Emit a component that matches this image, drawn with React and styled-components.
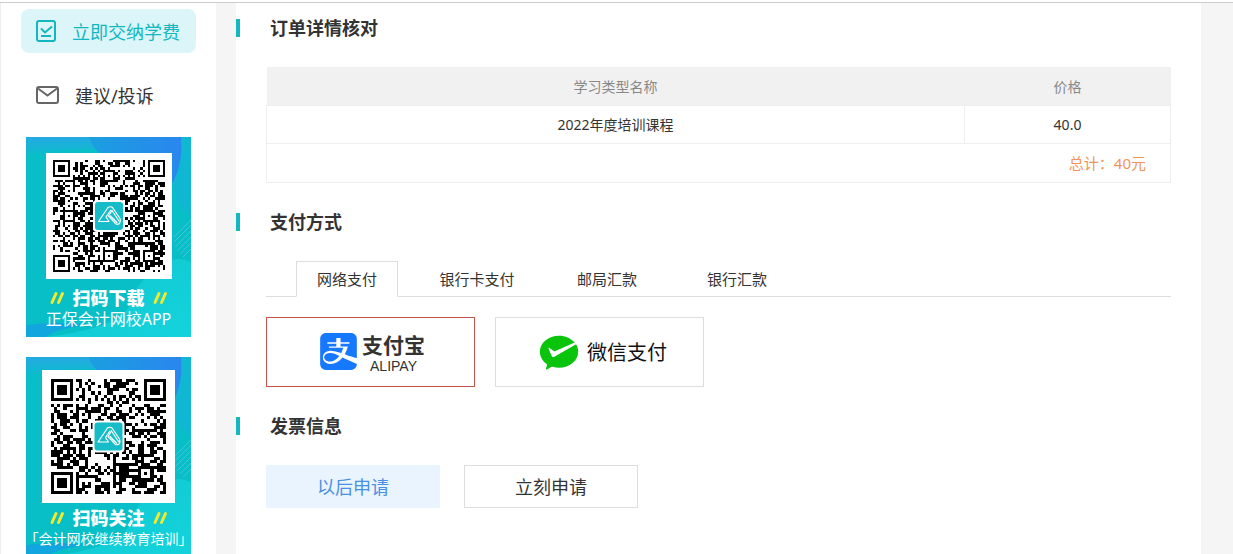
import React from "react";
import styled, { createGlobalStyle } from "styled-components";
import { SiAlipay } from "react-icons/si";
import { RiWechatPayFill } from "react-icons/ri";

const GlobalStyle = createGlobalStyle`
  * {
    box-sizing: border-box;
  }

  body {
    margin: 0;
    background-color: #f5f5f5;
    color: #333;
    font-family: "Noto Sans", "Noto Sans CJK SC", sans-serif;
    font-size: 14px;
  }

  button {
    font-family: inherit;
    color: inherit;
    cursor: pointer;
  }
`;

const Page = styled.div`
  display: flex;
  flex-direction: column;
  min-height: 100vh;
`;

const TopBar = styled.header`
  height: 3px;
  background-color: #fff;
  border-bottom: 1px solid #ccc;
`;

const Content = styled.div`
  display: flex;
  flex: 1;
  gap: 20px;
  padding-right: 32px;
`;

const Sidebar = styled.aside`
  flex: none;
  width: 216px;
  padding: 6px 20px 20px;
  background-color: #fff;
  border-left: 1px solid #eee;
`;

const Menu = styled.nav`
  display: flex;
  flex-direction: column;
  gap: 20px;
`;

const MenuLink = styled.a`
  display: flex;
  align-items: center;
  gap: 16px;
  height: 44px;
  padding-left: 15px;
  border-radius: 8px;
  font-size: 18px;
  text-decoration: none;
  color: ${(props) => (props.$active ? "#12b7bf" : "#333")};
  background-color: ${(props) => (props.$active ? "#dbf5f9" : "transparent")};
`;

const Banners = styled.div`
  display: flex;
  flex-direction: column;
  gap: 20px;
  padding: 20px 5px 0;
`;

const BannerBox = styled.section`
  position: relative;
  display: flex;
  flex-direction: column;
  align-items: center;
  height: 200px;
  overflow: hidden;
  color: #fff;
`;

const BannerArt = styled.svg`
  position: absolute;
  inset: 0;
  width: 100%;
  height: 100%;
`;

const CodeArea = styled.div`
  position: relative;
  display: flex;
  flex: none;
  align-items: center;
  height: 150px;
  padding-top: 8px;
`;

const CodeFrame = styled.div`
  display: flex;
  padding: ${(props) => props.$pad}px;
  background-color: #fff;
`;

const BannerTitle = styled.h3`
  position: relative;
  display: flex;
  align-items: center;
  gap: 8px;
  margin: 0;
  font-size: 18px;
  line-height: 22px;
  font-weight: 900;
`;

const BannerText = styled.p`
  position: relative;
  margin: 0;
  font-size: ${(props) => props.$size}px;
  line-height: 20px;
  white-space: nowrap;
`;

const Main = styled.main`
  display: flex;
  flex: 1;
  flex-direction: column;
  gap: 30px;
  min-width: 0;
  padding: 16px 0 30px;
  background-color: #fff;
`;

const Title = styled.h2`
  margin: 0 0 30px;
  padding-left: 30px;
  border-left: 4px solid #12b7bf;
  font-size: 18px;
  line-height: 18px;
  font-weight: bold;
`;

const Body = styled.div`
  padding: 0 30px;
`;

const Table = styled.table`
  width: 100%;
  border-collapse: collapse;
  table-layout: fixed;
  text-align: center;

  th {
    height: 38px;
    padding: 0;
    background-color: #f1f1f1;
    color: #888;
    font-weight: normal;
  }

  th:last-child {
    width: 206px;
  }

  td {
    height: 38px;
    padding: 0;
    border: 1px solid #eee;
  }

  tfoot td {
    height: 39px;
    padding-right: 24px;
    color: #f0945a;
    font-size: 15px;
    text-align: right;
  }
`;

const Tabs = styled.div`
  display: grid;
  grid-auto-flow: column;
  grid-auto-columns: 130px;
  justify-items: center;
  height: 36px;
  margin-bottom: 20px;
  padding-left: 16px;
  border-bottom: 1px solid #ddd;
`;

const Tab = styled.button`
  height: 36px;
  padding: 0 20px;
  border: 1px solid ${(props) => (props.$active ? "#ddd" : "transparent")};
  border-bottom-color: ${(props) => (props.$active ? "#fff" : "#ddd")};
  background-color: ${(props) => (props.$active ? "#fff" : "transparent")};
  font-size: 15px;
`;

const Options = styled.div`
  display: flex;
  flex-wrap: wrap;
  gap: ${(props) => props.$gap}px;
`;

const PayButton = styled.button`
  display: flex;
  align-items: center;
  justify-content: center;
  gap: 5px;
  width: 209px;
  height: 70px;
  padding: 0 0 0 4px;
  border: 1px solid ${(props) => (props.$active ? "#c9504c" : "#ddd")};
  background-color: #fff;
`;

const AlipayName = styled.span`
  display: flex;
  flex-direction: column;
  align-items: center;
  font-size: 21px;
  line-height: 28px;
  font-weight: bold;

  small {
    font-family: "Liberation Sans", Arial, sans-serif;
    font-size: 14px;
    line-height: 14px;
    font-weight: normal;
  }
`;

const WechatName = styled.span`
  color: #111;
  font-size: 20px;
`;

const InvoiceButton = styled.button`
  width: 174px;
  height: 43px;
  padding: 0;
  border: 1px solid ${(props) => (props.$active ? "#e9f4fe" : "#ddd")};
  background-color: ${(props) => (props.$active ? "#e9f4fe" : "#fff")};
  color: ${(props) => (props.$active ? "#4a90e2" : "#333")};
  font-size: 18px;
`;

function isFinder(x, y, n) {
  return (x < 8 && y < 8) || (x > n - 9 && y < 8) || (x < 8 && y > n - 9);
}

// modules of the code, joined into one path
function codePath(n, seed, marks) {
  let state = seed;
  let path = "";
  for (let y = 0; y < n; y++) {
    for (let x = 0; x < n; x++) {
      state = (state * 1103515245 + 12345) % 2147483648;
      let dark = state / 2147483648 < 0.52;
      if (isFinder(x, y, n)) continue;
      if (x === 6) dark = y % 2 === 0;
      if (y === 6) dark = x % 2 === 0;
      marks.forEach(([mx, my]) => {
        const d = Math.max(Math.abs(mx - x), Math.abs(my - y));
        if (d < 3) dark = d !== 1;
      });
      if (dark) path += `M${x} ${y}h1v1h-1z`;
    }
  }
  [[0, 0], [n - 7, 0], [0, n - 7]].forEach(([x, y]) => {
    path += `M${x} ${y}h7v7h-7zM${x + 1} ${y + 1}v5h5v-5zM${x + 2} ${y + 2}h3v3h-3z`;
  });
  return path;
}

function QrCode({ modules, size, seed, marks }) {
  const c = size / 2;
  return (
    <svg width={size} height={size} viewBox={`0 0 ${size} ${size}`} role="img" aria-label="二维码">
      <g transform={`scale(${size / modules})`} shapeRendering="crispEdges">
        <path d={codePath(modules, seed, marks)} fill="#000" />
      </g>
      <g transform={`translate(${c - 15} ${c - 15})`}>
        <rect x="-1" y="-1" width="32" height="32" rx="4" fill="#fff" />
        <rect x="1" y="1" width="28" height="28" rx="3" fill="#16bdc8" />
        <g fill="none" stroke="#fff" strokeWidth="1.2" strokeLinejoin="round" strokeLinecap="round">
          <path d="M14 6.500L4.500 20.500H15L12 16L16.500 9.500" />
          <path d="M14 6.500Q16.500 5 18.500 6.500L26 17.500Q27 20 25.500 22.500Q23.500 24 21.500 22.500L14.500 15L18 9.500" />
          <path d="M16.500 15L23 21.500M18 9.500L25 20" />
        </g>
      </g>
    </svg>
  );
}

function Slashes() {
  return (
    <svg width="15" height="14" viewBox="0 0 15 14" aria-hidden="true">
      <path d="M2 11.500L6 2.500M8.500 11.500L12.500 2.500" stroke="#f4ea2a" strokeWidth="3" strokeLinecap="round" />
    </svg>
  );
}

function Banner({ id, title, text, textSize, pad, code }) {
  return (
    <BannerBox>
      <BannerArt viewBox="0 0 165 200" preserveAspectRatio="none" aria-hidden="true">
        <defs>
          <linearGradient id={`${id}-top`} x1="0" y1="0" x2="1" y2="0">
            <stop offset="0" stopColor="#1b9fe0" />
            <stop offset="1" stopColor="#2a86ee" />
          </linearGradient>
          <linearGradient id={`${id}-left`} x1="0" y1="0" x2="0" y2="1">
            <stop offset="0" stopColor="#25a9e4" />
            <stop offset="1" stopColor="#08bfc8" />
          </linearGradient>
          <linearGradient id={`${id}-low`} x1="0" y1="0" x2="1" y2="1">
            <stop offset="0" stopColor="#10c5cf" />
            <stop offset="1" stopColor="#14d3dc" />
          </linearGradient>
        </defs>
        <rect width="165" height="200" fill="#08bfc8" />
        <path d="M0 0H90V14Q40 8 0 20Z" fill={`url(#${id}-left)`} />
        <path d="M63 0H155Q158 24 147 46L130 30Q72 30 63 0Z" fill={`url(#${id}-top)`} />
        <path d="M155 0H165V80Q150 70 147 46Q158 24 155 0Z" fill="#0fb7d3" />
        <g stroke="#3fc6d4" strokeWidth="1">
          <path d="M148 100L165 83M148 105L165 88M149 110L165 94M151 114L165 100M154 117L165 106M157 120L165 112" />
        </g>
        <path d="M165 125Q150 118 135 128Q108 146 103 170Q88 192 20 200H165Z" fill={`url(#${id}-low)`} />
        <path d="M0 188Q30 184 60 188Q30 192 20 200H0Z" fill="#12a6df" />
      </BannerArt>
      <CodeArea>
        <CodeFrame $pad={pad}>
          <QrCode {...code} />
        </CodeFrame>
      </CodeArea>
      <BannerTitle>
        <Slashes />
        {title}
        <Slashes />
      </BannerTitle>
      <BannerText $size={textSize}>{text}</BannerText>
    </BannerBox>
  );
}

function CheckIcon() {
  return (
    <svg width="20" height="22" viewBox="0 0 20 22" fill="none" stroke="#12b7bf" strokeWidth="2" aria-hidden="true">
      <rect x="1" y="1" width="18" height="20" rx="2" />
      <path d="M5 8.500L9 12.500L16 6.500M5 16H15" />
    </svg>
  );
}

function MailIcon() {
  return (
    <svg width="23" height="18" viewBox="0 0 23 18" fill="none" stroke="#666" strokeWidth="2" aria-hidden="true">
      <rect x="1" y="1" width="21" height="16" rx="2" />
      <path d="M2 2.500L11.500 9.500L21 2.500" />
    </svg>
  );
}

const appCode = {
  modules: 45,
  size: 112,
  seed: 2022,
  marks: [[22, 6], [6, 22], [38, 22], [22, 38], [38, 38]],
};

const followCode = { modules: 37, size: 115, seed: 71, marks: [[30, 30]] };

const tabs = ["网络支付", "银行卡支付", "邮局汇款", "银行汇款"];
const invoices = ["以后申请", "立刻申请"];

function App() {
  const [tab, setTab] = React.useState(tabs[0]);
  const [pay, setPay] = React.useState("alipay");
  const [invoice, setInvoice] = React.useState(invoices[0]);

  return (
    <Page>
      <GlobalStyle />
      <TopBar />
      <Content>
        <Sidebar>
          <Menu>
            <MenuLink href="#pay" $active>
              <CheckIcon />
              立即交纳学费
            </MenuLink>
            <MenuLink href="#feedback">
              <MailIcon />
              建议/投诉
            </MenuLink>
          </Menu>
          <Banners>
            <Banner id="app" title="扫码下载" text="正保会计网校APP" textSize={16} pad={7} code={appCode} />
            <Banner id="follow" title="扫码关注" text="「会计网校继续教育培训」" textSize={14} pad={9} code={followCode} />
          </Banners>
        </Sidebar>

        <Main>
          <section>
            <Title>订单详情核对</Title>
            <Body>
              <Table>
                <thead>
                  <tr>
                    <th>学习类型名称</th>
                    <th>价格</th>
                  </tr>
                </thead>
                <tbody>
                  <tr>
                    <td>2022年度培训课程</td>
                    <td>40.0</td>
                  </tr>
                </tbody>
                <tfoot>
                  <tr>
                    <td colSpan={2}>总计：40元</td>
                  </tr>
                </tfoot>
              </Table>
            </Body>
          </section>

          <section>
            <Title>支付方式</Title>
            <Body>
              <Tabs role="tablist">
                {tabs.map((name) => (
                  <Tab key={name} role="tab" aria-selected={tab === name} $active={tab === name} onClick={() => setTab(name)}>
                    {name}
                  </Tab>
                ))}
              </Tabs>
              <Options $gap={20}>
                <PayButton $active={pay === "alipay"} onClick={() => setPay("alipay")}>
                  <SiAlipay size={37} color="#1677ff" />
                  <AlipayName>
                    支付宝
                    <small>ALIPAY</small>
                  </AlipayName>
                </PayButton>
                <PayButton $active={pay === "wechat"} onClick={() => setPay("wechat")}>
                  <RiWechatPayFill size={46} color="#09c40b" />
                  <WechatName>微信支付</WechatName>
                </PayButton>
              </Options>
            </Body>
          </section>

          <section>
            <Title>发票信息</Title>
            <Body>
              <Options $gap={24}>
                {invoices.map((name) => (
                  <InvoiceButton key={name} $active={invoice === name} onClick={() => setInvoice(name)}>
                    {name}
                  </InvoiceButton>
                ))}
              </Options>
            </Body>
          </section>
        </Main>
      </Content>
    </Page>
  );
}

export default App;
